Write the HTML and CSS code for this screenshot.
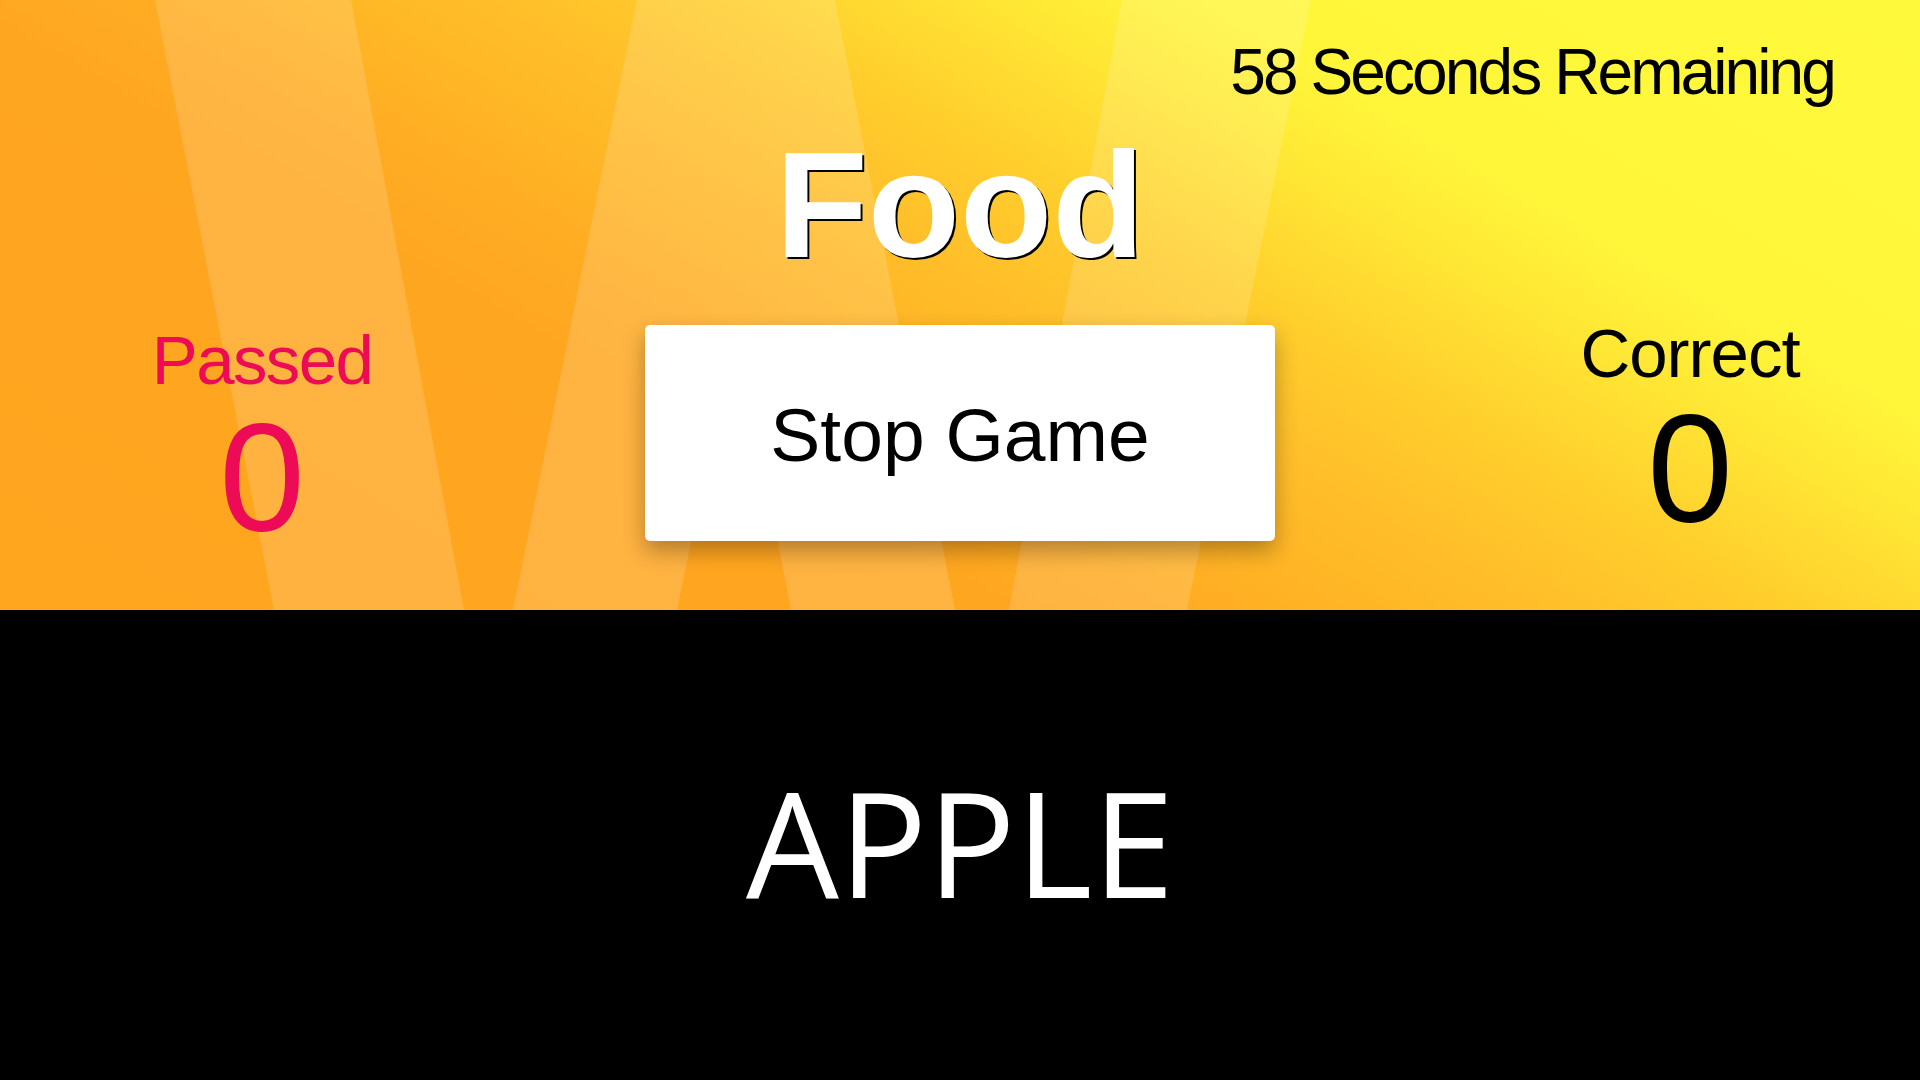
FILE: index.html
```html
<!DOCTYPE html>
<html lang="en">
<head>
<meta charset="utf-8">
<title>Food - Guessing Game</title>
<link rel="stylesheet" href="styles.css">
</head>
<body>
<main class="game">
  <section class="stage">
    <svg class="rays" viewBox="0 0 1920 610" preserveAspectRatio="none" aria-hidden="true">
      <g fill="#fff" opacity="0.15">
        <polygon points="155,0 351,0 464,610 274,610"/>
        <path d="M637 0 L835 0 L955 610 L791 610 L736 324 L677 610 L513 610 Z"/>
        <polygon points="1122,0 1311,0 1187,610 1009,610"/>
      </g>
    </svg>
    <div class="stage-content">
      <div class="timer">58 Seconds Remaining</div>
      <h1 class="category">Food</h1>
      <div class="scoreboard">
        <div class="stat stat-passed">
          <div class="stat-label">Passed</div>
          <div class="stat-value">0</div>
        </div>
        <button class="stop-btn" type="button">Stop Game</button>
        <div class="stat stat-correct">
          <div class="stat-label">Correct</div>
          <div class="stat-value">0</div>
        </div>
      </div>
    </div>
  </section>
  <section class="word-panel">
    <div class="word">APPLE</div>
  </section>
</main>
</body>
</html>
```
FILE: styles.css
```css
html, body {
  margin: 0;
  padding: 0;
}

body {
  width: 1920px;
  height: 1080px;
  overflow: hidden;
  background: #000;
  font-family: "Liberation Sans", Arial, sans-serif;
}

.game {
  display: flex;
  flex-direction: column;
  height: 1080px;
}

.stage {
  position: relative;
  flex: none;
  height: 610px;
  overflow: hidden;
  background: linear-gradient(30deg,
    #ffa51e 0%,
    #ffa620 34%,
    #ffac23 40%,
    #ffb726 47%,
    #ffc02a 53%,
    #ffce2c 60%,
    #ffdb31 65%,
    #ffe935 70%,
    #fff63a 76%,
    #fff93b 100%);
}

.rays {
  position: absolute;
  top: 0;
  left: 0;
  width: 100%;
  height: 100%;
}

.stage-content {
  position: relative;
  padding-top: 40px;
}

.timer {
  font-size: 64px;
  line-height: 64px;
  letter-spacing: -2.9px;
  text-align: right;
  padding-right: 86px;
  color: #000;
}

.category {
  margin: 25px 0 0;
  font-size: 151px;
  line-height: 151px;
  font-weight: 700;
  color: #fff;
  text-align: center;
  text-shadow: 2px 2px 0 #000;
}

.scoreboard {
  display: grid;
  grid-template-columns: 645px 630px 645px;
  align-items: start;
  margin-top: 45px;
}

.stat {
  text-align: center;
}

.stat-passed {
  padding-right: 121px;
  color: #ed0a56;
}

.stat-correct {
  padding-left: 185px;
  color: #000;
}

.stat-label {
  font-size: 69px;
  line-height: 69px;
  letter-spacing: -1px;
}

.stat-passed .stat-label {
  margin-top: 1px;
  letter-spacing: -1.6px;
}

.stat-correct .stat-label {
  margin-top: -6px;
}

.stat-value {
  font-size: 154px;
  line-height: 154px;
}

.stat-passed .stat-value {
  margin-top: 6px;
}

.stat-correct .stat-value {
  margin-top: 4px;
}

.stop-btn {
  display: flex;
  align-items: center;
  justify-content: center;
  height: 216px;
  margin: 0;
  padding: 4px 0 0;
  border: 0;
  border-radius: 5px;
  background: #fff;
  box-shadow: 0 10px 22px rgba(0, 0, 0, 0.3);
  font-family: "Liberation Sans", Arial, sans-serif;
  font-size: 75px;
  line-height: 1;
  color: #000;
  cursor: pointer;
}

.word-panel {
  flex: 1;
  display: flex;
  align-items: center;
  justify-content: center;
  padding-bottom: 8px;
  background: #000;
}

.word {
  color: #fff;
  font-family: "Open Sans", "Liberation Sans", Arial, sans-serif;
  font-size: 147px;
  line-height: 1;
}
```
